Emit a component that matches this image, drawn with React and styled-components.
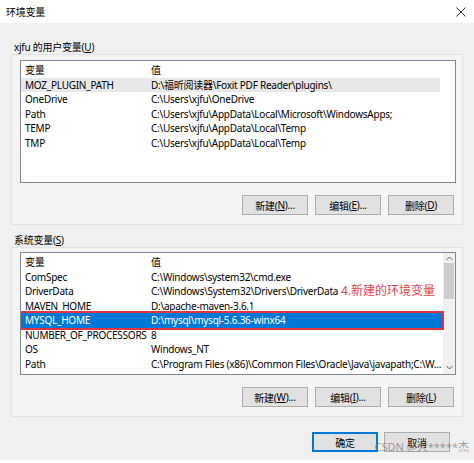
import styled, { createGlobalStyle } from "styled-components";

const GlobalStyle = createGlobalStyle`
  html, body {
    margin: 0;
    padding: 0;
    background: #ffffff;
  }
  body {
    font-family: "Noto Sans", "Noto Sans CJK SC", sans-serif;
    font-size: 10px;
    letter-spacing: -0.25px;
    color: #000;
  }
`;

const Window = styled.div`
  position: relative;
  width: 474px;
  height: 460px;
  background: #f0f0f0;
  display: flex;
  flex-direction: column;
  overflow: hidden;
`;

const TitleBar = styled.div`
  height: 23px;
  background: #ffffff;
  display: flex;
  align-items: center;
  justify-content: space-between;
  padding: 0 8px 0 6px;
`;

const Body = styled.div`
  padding: 17px 11px 0 11px;
  display: flex;
  flex-direction: column;
`;

const SectionLabel = styled.div`
  height: 14px;
  line-height: 14px;
  padding-left: 3px;
  margin-top: ${(p) => p.$top || 0}px;
`;

const Group = styled.div`
  border: 1px solid #e2e2e2;
  background: #f4f4f4;
  padding: ${(p) => p.$padTop}px 6px 9px 8px;
  display: flex;
  flex-direction: column;
`;

const ListBox = styled.div`
  position: relative;
  height: 121px;
  border: 1px solid #828790;
  background: #ffffff;
  display: flex;
  overflow: hidden;
`;

const Rows = styled.div`
  flex: 1;
  padding-top: 2px;
  display: flex;
  flex-direction: column;
`;

const Row = styled.div`
  display: grid;
  grid-template-columns: 126px 1fr;
  height: 14.5px;
  line-height: 14.5px;
  flex-shrink: 0;
  width: ${(p) => (p.$short ? "419px" : "auto")};
  background: ${(p) => (p.$selected ? "#0078d7" : p.$hover ? "#e8e8e8" : "transparent")};
  color: ${(p) => (p.$selected ? "#ffffff" : "#000")};
  white-space: nowrap;
  overflow: hidden;
`;

const Cell = styled.span`
  padding-left: 4px;
  overflow: hidden;
`;

const ScrollBar = styled.div`
  width: 12px;
  background: #f0f0f0;
  display: flex;
  flex-direction: column;
  align-items: center;
  justify-content: space-between;
  padding: 3px 0 4px;
`;

const ThumbTrack = styled.div`
  flex: 1;
  width: 100%;
  display: flex;
  flex-direction: column;
  align-items: center;
`;

const Thumb = styled.div`
  width: 10px;
  height: 36px;
  background: #cdcdcd;
  margin-top: 2px;
`;

const ButtonRow = styled.div`
  display: flex;
  justify-content: flex-end;
  gap: 7px;
  margin-top: 12px;
  padding-right: 2px;
`;

const Button = styled.button`
  width: 66px;
  height: 20px;
  padding: 0;
  font-family: inherit;
  font-size: 10px;
  letter-spacing: -0.25px;
  color: #000;
  background: #e1e1e1;
  border: ${(p) => (p.$default ? "2px solid #0078d7" : "1px solid #adadad")};
  display: flex;
  align-items: center;
  justify-content: center;
`;

const Footer = styled.div`
  display: flex;
  justify-content: flex-end;
  gap: 6px;
  padding: 15px 24px 0 0;
`;

const Annotation = styled.div`
  position: absolute;
  left: 320px;
  top: 30px;
  color: #e8434b;
  font-size: 12px;
  letter-spacing: 0;
  line-height: 16px;
  white-space: nowrap;
`;

const SelectionFrame = styled.div`
  position: absolute;
  left: -2px;
  top: 58px;
  width: 421px;
  height: 15px;
  border: 2px solid #e0343e;
`;

const Watermark = styled.div`
  position: absolute;
  right: 5px;
  bottom: 6px;
  font-size: 11px;
  letter-spacing: 0;
  color: rgba(120, 120, 120, 0.7);
  white-space: nowrap;
`;

const U = styled.span`
  text-decoration: underline;
`;

const CloseIcon = () => (
  <svg width="10" height="10" viewBox="0 0 10 10">
    <path d="M0.5 0.5 L9.5 9.5 M9.5 0.5 L0.5 9.5" stroke="#333" strokeWidth="1" />
  </svg>
);

const Chevron = ({ up }) => (
  <svg width="7" height="5" viewBox="0 0 7 5">
    <path d={up ? "M0.5 4 L3.5 1 L6.5 4" : "M0.5 1 L3.5 4 L6.5 1"} stroke="#606060" fill="none" strokeWidth="1" />
  </svg>
);

const userVars = [
  ["MOZ_PLUGIN_PATH", "D:\\福昕阅读器\\Foxit PDF Reader\\plugins\\"],
  ["OneDrive", "C:\\Users\\xjfu\\OneDrive"],
  ["Path", "C:\\Users\\xjfu\\AppData\\Local\\Microsoft\\WindowsApps;"],
  ["TEMP", "C:\\Users\\xjfu\\AppData\\Local\\Temp"],
  ["TMP", "C:\\Users\\xjfu\\AppData\\Local\\Temp"],
];

const sysVars = [
  ["ComSpec", "C:\\Windows\\system32\\cmd.exe"],
  ["DriverData", "C:\\Windows\\System32\\Drivers\\DriverData"],
  ["MAVEN_HOME", "D:\\apache-maven-3.6.1"],
  ["MYSQL_HOME", "D:\\mysql\\mysql-5.6.36-winx64"],
  ["NUMBER_OF_PROCESSORS", "8"],
  ["OS", "Windows_NT"],
  ["Path", "C:\\Program Files (x86)\\Common Files\\Oracle\\Java\\javapath;C:\\W..."],
  ["PATHEXT", ".COM;.EXE;.BAT;.CMD;.VBS;.VBE;.JS;.JSE;.WSF;.WSH;.MSC"],
];

const App = () => {
  return (
    <Window>
      <GlobalStyle />
      <TitleBar>
        <span>环境变量</span>
        <CloseIcon />
      </TitleBar>
      <Body>
        <SectionLabel>
          xjfu 的用户变量(<U>U</U>)
        </SectionLabel>
        <Group $padTop={5}>
          <ListBox>
            <Rows>
              <Row>
                <Cell>变量</Cell>
                <Cell>值</Cell>
              </Row>
              {userVars.map(([k, v], i) => (
                <Row key={k} $hover={i === 0} $short>
                  <Cell>{k}</Cell>
                  <Cell>{v}</Cell>
                </Row>
              ))}
            </Rows>
          </ListBox>
          <ButtonRow>
            <Button>
              新建(<U>N</U>)...
            </Button>
            <Button>
              编辑(<U>E</U>)...
            </Button>
            <Button>
              删除(<U>D</U>)
            </Button>
          </ButtonRow>
        </Group>
        <SectionLabel $top={8}>
          系统变量(<U>S</U>)
        </SectionLabel>
        <Group $padTop={4}>
          <ListBox>
            <Rows>
              <Row>
                <Cell>变量</Cell>
                <Cell>值</Cell>
              </Row>
              {sysVars.map(([k, v]) => (
                <Row key={k} $selected={k === "MYSQL_HOME"}>
                  <Cell>{k}</Cell>
                  <Cell>{v}</Cell>
                </Row>
              ))}
            </Rows>
            <ScrollBar>
              <Chevron up />
              <ThumbTrack>
                <Thumb />
              </ThumbTrack>
              <Chevron />
            </ScrollBar>
            <Annotation>4.新建的环境变量</Annotation>
            <SelectionFrame />
          </ListBox>
          <ButtonRow>
            <Button>
              新建(<U>W</U>)...
            </Button>
            <Button>
              编辑(<U>I</U>)...
            </Button>
            <Button>
              删除(<U>L</U>)
            </Button>
          </ButtonRow>
        </Group>
      </Body>
      <Footer>
        <Button $default>确定</Button>
        <Button>取消</Button>
      </Footer>
      <Watermark>CSDN @大*****杰</Watermark>
    </Window>
  );
};

export default App;
